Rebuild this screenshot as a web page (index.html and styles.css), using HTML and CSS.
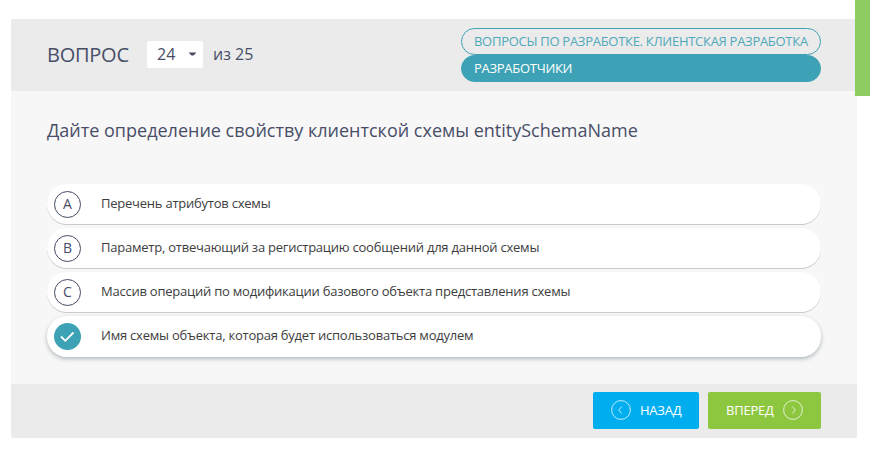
FILE: index.html
```html
<!DOCTYPE html>
<html lang="ru">
<head>
<meta charset="utf-8">
<title>Вопрос 24 из 25</title>
<link rel="stylesheet" href="styles.css">
</head>
<body>
<main class="quiz">
  <header class="quiz-header">
    <h1 class="title"><span>ВОПРОС</span></h1>
    <div class="select"><span>24</span><svg class="caret" viewBox="0 0 7 4"><path d="M0 0.500h7v.5L4.500 3.500h-2L0 1z"/></svg></div>
    <span class="total">из 25</span>
    <div class="tags">
      <div class="tag"><span class="tag-topic">ВОПРОСЫ ПО РАЗРАБОТКЕ. КЛИЕНТСКАЯ РАЗРАБОТКА</span></div>
      <div class="tag filled"><span class="tag-role">РАЗРАБОТЧИКИ</span></div>
    </div>
  </header>
  <section class="quiz-body">
    <h2 class="question"><span>Дайте определение свойству клиентской схемы entitySchemaName</span></h2>
    <ul class="answers">
      <li class="answer"><span class="letter">A</span><span class="text">Перечень атрибутов схемы</span></li>
      <li class="answer"><span class="letter">B</span><span class="text">Параметр, отвечающий за регистрацию сообщений для данной схемы</span></li>
      <li class="answer"><span class="letter">C</span><span class="text">Массив операций по модификации базового объекта представления схемы</span></li>
      <li class="answer selected"><span class="letter"><svg viewBox="0 0 27 27"><path d="M7 13.500l4.300 4.300 8.200-8.300"/></svg></span><span class="text">Имя схемы объекта, которая будет использоваться модулем</span></li>
    </ul>
  </section>
  <footer class="quiz-footer">
    <div class="button back"><svg viewBox="0 0 20 20"><circle cx="10" cy="10" r="9.4"/><path d="M10.700 6.500L7.800 10l2.900 3.500"/></svg><span>НАЗАД</span></div>
    <div class="button next"><span>ВПЕРЕД</span><svg viewBox="0 0 20 20"><circle cx="10" cy="10" r="9.4"/><path d="M9.300 6.500l2.900 3.500-2.900 3.500"/></svg></div>
  </footer>
</main>
<div class="side-tab"></div>
</body>
</html>
```

FILE: styles.css
```css
* { box-sizing: border-box; }
body {
  margin: 0;
  height: 452px;
  overflow: hidden;
  background: #fff;
  color: #484e67;
  font-family: "Open Sans", "Noto Sans", sans-serif;
}
.quiz {
  width: 846px;
  margin: 19px 0 0 11px;
  border-radius: 2px;
  overflow: hidden;
  background: #f7f7f7;
}
.quiz-header {
  display: flex;
  align-items: center;
  height: 72px;
  padding: 0 36px;
  background: #ebebeb;
}
.title {
  width: 100px;
  margin: 0;
  padding-bottom: 2px;
  font-size: 20px;
  font-weight: 400;
  letter-spacing: -.25px;
}
.select {
  display: flex;
  align-items: center;
  justify-content: space-between;
  width: 56px;
  height: 27px;
  margin-bottom: 1px;
  padding: 0 7px 1px 10px;
  border-radius: 2px;
  background: #fff;
  font-size: 16px;
}
.caret { width: 7px; height: 4px; fill: #444a63; }
.total { margin-left: 10px; padding-bottom: 2px; font-size: 16px; }
.tags { width: 360px; margin-left: auto; }
.tag {
  height: 27px;
  padding: 0 12px;
  border: 1px solid #3da2b5;
  border-radius: 14px;
  color: #4fa9ba;
  font-size: 13px;
  letter-spacing: -.28px;
  line-height: 25px;
  white-space: nowrap;
}
.filled { background: #3da2b5; color: #fff; }
.quiz-body { height: 293px; padding: 27px 36px 0; }
.question {
  height: 24px;
  margin: 0 0 42px;
  font-size: 18px;
  font-weight: 400;
  line-height: 24px;
  white-space: nowrap;
}
.answers {
  display: flex;
  flex-direction: column;
  gap: 4px;
  margin: 0;
  padding: 0;
  list-style: none;
}
.answer {
  display: flex;
  align-items: center;
  height: 40px;
  padding-left: 7px;
  border-radius: 20px;
  background: #fff;
  box-shadow: 0 1px 0 #cbcbcd;
  color: #3d3d40;
  font-size: 13px;
}
.text { padding-bottom: 2px; letter-spacing: -.23px; }
.selected { height: 41px; padding-bottom: 1px; box-shadow: 0 2px 4px rgba(50, 70, 80, .35); }
.letter {
  display: flex;
  align-items: center;
  justify-content: center;
  width: 27px;
  height: 27px;
  margin-right: 20px;
  padding-bottom: 1px;
  border: 1px solid #444a63;
  border-radius: 50%;
  color: #484e67;
  font-size: 14px;
}
.selected .letter { padding: 0; border: 0; background: #3da2b5; }
.letter svg { width: 27px; height: 27px; fill: none; stroke: #fff; stroke-width: 1.8; }
.quiz-footer {
  display: flex;
  align-items: center;
  justify-content: flex-end;
  gap: 9px;
  height: 54px;
  padding: 0 36px 1px;
  background: #ebebeb;
}
.button {
  display: flex;
  align-items: center;
  gap: 9px;
  height: 37px;
  padding: 0 18px 1px;
  border-radius: 2px;
  color: #fff;
  font-size: 13px;
  letter-spacing: -.22px;
  white-space: nowrap;
}
.button svg { flex: none; width: 20px; height: 20px; fill: none; stroke: rgba(255, 255, 255, .75); stroke-width: 1; }
.back { width: 106px; background: #00aef0; }
.next { width: 113px; background: #8dc73f; }
.side-tab {
  position: absolute;
  top: 0;
  right: 0;
  width: 15px;
  height: 96px;
  background: #8ecb60;
}
```
